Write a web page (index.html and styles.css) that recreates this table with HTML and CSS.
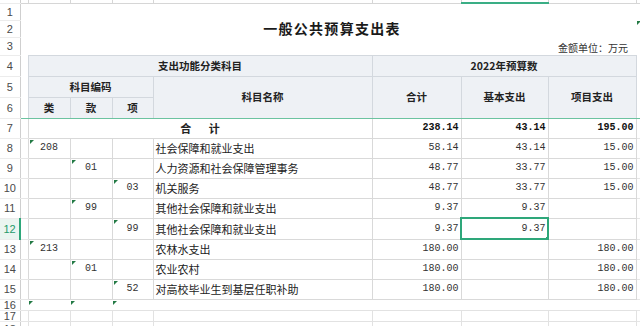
FILE: index.html
```html
<!DOCTYPE html>
<html lang="zh">
<head>
<meta charset="utf-8">
<title>一般公共预算支出表</title>
<link rel="stylesheet" href="styles.css">
</head>
<body>
<table class="sheet">
  <colgroup>
    <col class="c-rh"><col class="c-a"><col class="c-lei"><col class="c-kuan"><col class="c-xiang"><col class="c-name"><col class="c-total"><col class="c-basic"><col class="c-proj"><col class="c-ext">
  </colgroup>
  <tr class="r-top">
    <td class="rh"></td><td class="top"></td><td class="top"></td><td class="top"></td><td class="top"></td><td class="top"></td><td class="top"></td><td class="top top-sel"></td><td class="top"></td><td class="top"></td>
  </tr>
  <tr class="r-t1">
    <td class="rh">1</td><td class="blank" colspan="9"></td>
  </tr>
  <tr class="r-t2">
    <td class="rh">2</td><td class="blank"></td><td class="blank title" colspan="7">一般公共预算支出表</td><td class="blank tri-cell"><span class="tri"></span></td>
  </tr>
  <tr class="r-t3">
    <td class="rh">3</td><td class="blank"></td><td class="blank unit" colspan="7">金额单位：万元</td><td class="blank"></td>
  </tr>
  <tr class="r-h">
    <td class="rh">4</td><td class="blank"></td><td class="hd" colspan="4">支出功能分类科目</td><td class="hd" colspan="3">2022年预算数</td><td class="blank"></td>
  </tr>
  <tr class="r-h">
    <td class="rh">5</td><td class="blank"></td><td class="hd" colspan="3">科目编码</td><td class="hd" rowspan="2">科目名称</td><td class="hd" rowspan="2">合计</td><td class="hd" rowspan="2">基本支出</td><td class="hd" rowspan="2">项目支出</td><td class="blank"></td>
  </tr>
  <tr class="r-h r-freeze">
    <td class="rh">6</td><td class="blank"></td><td class="hd">类</td><td class="hd">款</td><td class="hd">项</td><td class="blank"></td>
  </tr>
  <tr class="r-d">
    <td class="rh">7</td><td class="ga"></td><td class="sum-label" colspan="4">合&nbsp;&nbsp;&nbsp;&nbsp;&nbsp;&nbsp;&nbsp;计</td><td class="num bold">238.14</td><td class="num bold">43.14</td><td class="num bold">195.00</td><td class="ga"></td>
  </tr>
  <tr class="r-d">
    <td class="rh">8</td><td class="ga"></td><td class="code"><span class="tri"></span>208</td><td class="code"></td><td class="code"></td><td class="name">社会保障和就业支出</td><td class="num">58.14</td><td class="num">43.14</td><td class="num">15.00</td><td class="ga"></td>
  </tr>
  <tr class="r-d">
    <td class="rh">9</td><td class="ga"></td><td class="code"></td><td class="code"><span class="tri"></span>01</td><td class="code"></td><td class="name">人力资源和社会保障管理事务</td><td class="num">48.77</td><td class="num">33.77</td><td class="num">15.00</td><td class="ga"></td>
  </tr>
  <tr class="r-d">
    <td class="rh">10</td><td class="ga"></td><td class="code"></td><td class="code"></td><td class="code"><span class="tri"></span>03</td><td class="name">机关服务</td><td class="num">48.77</td><td class="num">33.77</td><td class="num">15.00</td><td class="ga"></td>
  </tr>
  <tr class="r-d">
    <td class="rh">11</td><td class="ga"></td><td class="code"></td><td class="code"><span class="tri"></span>99</td><td class="code"></td><td class="name">其他社会保障和就业支出</td><td class="num">9.37</td><td class="num">9.37</td><td class="num"></td><td class="ga"></td>
  </tr>
  <tr class="r-d r-d21">
    <td class="rh rh-sel">12</td><td class="ga"></td><td class="code"></td><td class="code"></td><td class="code"><span class="tri"></span>99</td><td class="name">其他社会保障和就业支出</td><td class="num">9.37</td><td class="num sel">9.37<span class="handle"></span></td><td class="num"></td><td class="ga"></td>
  </tr>
  <tr class="r-d">
    <td class="rh">13</td><td class="ga"></td><td class="code"><span class="tri"></span>213</td><td class="code"></td><td class="code"></td><td class="name">农林水支出</td><td class="num">180.00</td><td class="num"></td><td class="num">180.00</td><td class="ga"></td>
  </tr>
  <tr class="r-d">
    <td class="rh">14</td><td class="ga"></td><td class="code"></td><td class="code"><span class="tri"></span>01</td><td class="code"></td><td class="name">农业农村</td><td class="num">180.00</td><td class="num"></td><td class="num">180.00</td><td class="ga"></td>
  </tr>
  <tr class="r-d">
    <td class="rh">15</td><td class="ga"></td><td class="code"></td><td class="code"></td><td class="code"><span class="tri"></span>52</td><td class="name">对高校毕业生到基层任职补助</td><td class="num">180.00</td><td class="num"></td><td class="num">180.00</td><td class="ga"></td>
  </tr>
  <tr class="r-s r-gap">
    <td class="rh">16</td><td class="ga"></td><td class="gap"><span class="tri"></span></td><td class="gap"><span class="tri"></span></td><td class="gap"><span class="tri"></span></td><td class="gap" colspan="4"></td><td class="ga"></td>
  </tr>
  <tr class="r-s">
    <td class="rh">17</td><td class="ga"></td><td class="g"></td><td class="g"></td><td class="g"></td><td class="g"></td><td class="g"></td><td class="g"></td><td class="g"></td><td class="ga"></td>
  </tr>
  <tr class="r-s">
    <td class="rh rh-last">18</td><td class="ga"></td><td class="g"></td><td class="g"></td><td class="g"></td><td class="g"></td><td class="g"></td><td class="g"></td><td class="g"></td><td class="ga"></td>
  </tr>
</table>
</body>
</html>
```

FILE: styles.css
```css
html, body {
  margin: 0;
  padding: 0;
  background: #ffffff;
  overflow: hidden;
}

body {
  width: 640px;
  height: 326px;
  font-family: "Noto Sans CJK SC", "Noto Sans", sans-serif;
}

.sheet {
  border-collapse: collapse;
  table-layout: fixed;
  width: 640px;
}

.c-rh { width: 20px; }
.c-a { width: 8px; }
.c-lei { width: 42px; }
.c-kuan { width: 42px; }
.c-xiang { width: 41px; }
.c-name { width: 219px; }
.c-total { width: 89px; }
.c-basic { width: 87px; }
.c-proj { width: 88px; }
.c-ext { width: 4px; }

.sheet td {
  padding: 0;
  border: 1px solid #d9d9d9;
  font-size: 11px;
  color: #222;
  white-space: nowrap;
  overflow: hidden;
  position: relative;
  line-height: 14px;
}

.r-top { height: 3px; }
.r-t1 { height: 17px; }
.r-t2 { height: 17px; }
.r-t3 { height: 18px; }
.r-h { height: 21px; }
.r-d { height: 20px; }
.r-d21 { height: 21px; }
.r-s { height: 11px; }

.sheet td.rh {
  border: none;
  border-right: 1px solid #cfcfcf;
  border-bottom: 1px solid #ececec;
  font-family: "Liberation Sans", "DejaVu Sans", sans-serif;
  font-size: 11px;
  color: #4a4a4a;
  text-align: center;
  line-height: 10px;
  background: #ffffff;
}

.sheet td.rh-last {
  vertical-align: top;
  padding-top: 2px;
}

.sheet td.rh-sel {
  color: #1f9a6a;
  background: #eaf5f0;
  border-right: 2px solid #2ea77a;
}

.sheet td.top {
  border: none;
  border-right: 1px solid #d6d6d6;
  border-bottom: 1px solid #d6d6d6;
  line-height: 0;
  font-size: 0;
}

.sheet td.top-sel {
  border-bottom: 2px solid #3aae85;
}

.sheet td.blank {
  border: none;
}

.sheet td.title {
  text-align: center;
  font-size: 14px;
  font-weight: 700;
  letter-spacing: 1.3px;
  color: #1a1a1a;
  line-height: 17px;
  vertical-align: middle;
  overflow: visible;
}

.sheet td.unit {
  text-align: right;
  font-size: 10px;
  padding-right: 8px;
  color: #333;
  vertical-align: bottom;
  line-height: 14px;
}

.sheet td.tri-cell {
  vertical-align: top;
}

.sheet td.hd {
  background: #eef1f5;
  border-color: #d3d8de;
  text-align: center;
  font-weight: 700;
  font-size: 10.5px;
  color: #222;
}

.r-freeze td.hd,
.r-freeze td.blank {
  border-bottom: 1px solid #6cc3a0;
}

.r-h td.hd[rowspan] {
  border-bottom: 1px solid #6cc3a0;
}

.sheet td.ga {
  border: none;
  border-bottom: 1px solid #e6e6e6;
}

.sheet td.sum-label {
  text-align: center;
  font-weight: 700;
  padding-left: 0;
}

.sheet td.code {
  text-align: center;
  font-family: "Liberation Mono", "DejaVu Sans Mono", monospace;
  font-size: 10px;
  color: #333;
}

.sheet td.name {
  padding-left: 2px;
  color: #222;
}

.sheet td.num {
  text-align: right;
  padding-right: 2px;
  font-family: "Liberation Mono", "DejaVu Sans Mono", monospace;
  font-size: 10px;
  color: #333;
}

.sheet td.bold {
  font-weight: 700;
  color: #111;
}

.sheet td.sel {
  outline: 2px solid #2ea77a;
  outline-offset: -1px;
}

.handle {
  position: absolute;
  right: -2px;
  bottom: -2px;
  width: 4px;
  height: 4px;
  background: #2ea77a;
}

.tri {
  position: absolute;
  left: 1px;
  top: 1px;
  width: 0;
  height: 0;
  border-top: 4px solid #237a45;
  border-right: 4px solid transparent;
}

.sheet td.gap {
  border-left: none;
  border-right: none;
  border-top: 1px solid #cfcfcf;
  border-bottom: 1px solid #e2e2e2;
}

.sheet td.g {
  border-color: #e2e2e2;
}
```
